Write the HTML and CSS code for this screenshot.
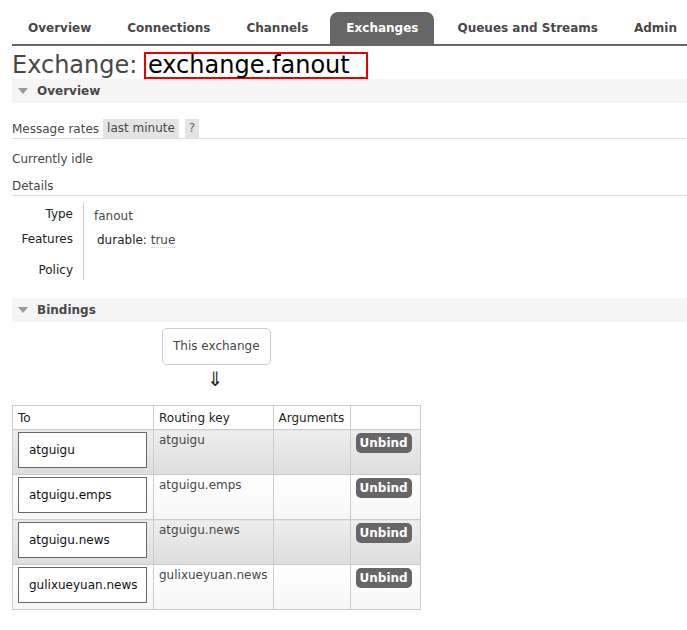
FILE: index.html
```html
<!DOCTYPE html>
<html>
<head>
<meta charset="utf-8">
<link rel="stylesheet" href="styles.css">
</head>
<body>
<div class="page">
  <nav class="tabs">
    <a class="tab">Overview</a>
    <a class="tab">Connections</a>
    <a class="tab">Channels</a>
    <a class="tab active">Exchanges</a>
    <a class="tab">Queues and Streams</a>
    <a class="tab">Admin</a>
  </nav>
  <h1 class="title">Exchange: <span class="name">exchange.fanout</span></h1>

  <div class="section-head"><span class="tri"></span>Overview</div>
  <div class="rates">
    <span>Message rates</span>
    <span class="chip">last minute</span>
    <span class="chip q">?</span>
  </div>
  <div class="idle">Currently idle</div>
  <div class="details-title">Details</div>
  <div class="facts">
    <div class="labels">
      <div class="lbl l1">Type</div>
      <div class="lbl l2">Features</div>
      <div class="lbl l3">Policy</div>
    </div>
    <div class="values">
      <div class="val v1">fanout</div>
      <div class="val v2"><span class="dk">durable:</span> <span class="tru">true</span></div>
    </div>
  </div>

  <div class="section-head bind"><span class="tri"></span>Bindings</div>
  <div class="flow">
    <div class="this-ex">This exchange</div>
    <div class="arrow">⇓</div>
  </div>
  <table class="bindings">
    <thead>
      <tr><th class="c1">To</th><th class="c2">Routing key</th><th class="c3">Arguments</th><th class="c4"></th></tr>
    </thead>
    <tbody>
      <tr class="alt1"><td><div class="qbox">atguigu</div></td><td class="rk">atguigu</td><td></td><td><span class="btn">Unbind</span></td></tr>
      <tr class="alt2"><td><div class="qbox">atguigu.emps</div></td><td class="rk">atguigu.emps</td><td></td><td><span class="btn">Unbind</span></td></tr>
      <tr class="alt1"><td><div class="qbox">atguigu.news</div></td><td class="rk">atguigu.news</td><td></td><td><span class="btn">Unbind</span></td></tr>
      <tr class="alt2"><td><div class="qbox">gulixueyuan.news</div></td><td class="rk">gulixueyuan.news</td><td></td><td><span class="btn">Unbind</span></td></tr>
    </tbody>
  </table>
</div>
</body>
</html>
```
FILE: styles.css
```css
html, body { margin: 0; padding: 0; background: #fff; }
body { font-family: "DejaVu Sans", Verdana, sans-serif; font-size: 12px; color: #484848; }
.page { padding: 12px 0 0 12px; }

.tabs { display: flex; height: 32px; border-bottom: 2px solid #666; white-space: nowrap; }
.tab { display: block; font-weight: bold; font-size: 12px; line-height: 32px; padding: 0 18px; color: #484848; }
.tab:first-child { padding-left: 16px; }
.tab.active { background: #666; color: #fff; border-radius: 8px 8px 0 0; padding: 0 16px; margin-left: 4px; margin-right: 5px; }

.title { margin: 5px 0 0 0; font-weight: normal; font-size: 24px; line-height: 28px; height: 28px; color: #484848; }
.name { display: inline-block; border: 2px solid #e00; color: #000; padding: 0 16px 0 2px; line-height: 23px; height: 23px; vertical-align: top; margin-top: 1px; margin-left: -1px; }

.section-head { background: #f5f5f5; height: 24px; line-height: 24px; font-weight: bold; font-size: 12px; display: flex; align-items: center; }
.tri { width: 0; height: 0; border-left: 5px solid transparent; border-right: 5px solid transparent; border-top: 6px solid #999; margin: 0 9px 0 6px; }

.rates { margin-top: 16px; display: flex; align-items: center; border-bottom: 1px solid #ddd; height: 19px; }
.chip { background: #e4e4e4; padding: 0 4px; margin-left: 4px; line-height: 19px; }
.chip.q { margin-left: 6px; color: #666; }
.idle { margin-top: 13px; line-height: 14px; }
.details-title { margin-top: 13px; line-height: 14px; padding-bottom: 2px; border-bottom: 1px solid #ddd; }

.facts { display: flex; margin-top: 11px; }
.labels { width: 61px; text-align: right; color: #222; }
.lbl { line-height: 14px; }
.l2 { margin-top: 11px; }
.l3 { margin-top: 17px; }
.values { margin-left: 10px; border-left: 1px solid #ccc; padding-left: 10px; height: 78px; margin-top: -5px; }
.val { line-height: 14px; }
.v1 { margin-top: 7px; }
.v2 { margin-top: 8px; padding-left: 3px; }
.dk { color: #222; }
.tru { border-bottom: 1px dotted #ccc; display: inline-block; margin-top: 2px; }

.bind { margin-top: 18px; }
.flow { display: flex; flex-direction: column; align-items: flex-start; padding-left: 150px; }
.this-ex { margin-top: 6px; border: 1px solid #ccc; border-radius: 5px; padding: 0 10px; line-height: 35px; height: 35px; }
.arrow { font-size: 20px; line-height: 20px; margin-left: 45px; margin-top: 4px; color: #222; }

.bindings { border-collapse: collapse; margin-top: 16px; border: 1px solid #ccc; }
.bindings th { font-weight: normal; text-align: left; padding: 0 5px; height: 23px; border: 1px solid #ccc; color: #222; background: #fff; }
.bindings th.c1 { width: 130px; }
.bindings th.c2 { width: 107px; }
.bindings th.c3 { width: 66px; }
.bindings th.c4 { width: 59px; }
.bindings td { border: 1px solid #ccc; vertical-align: top; padding: 2px 5px; height: 39px; }
.bindings tr.alt1 td { background: linear-gradient(#eee, #ddd); }
.bindings tr.alt2 td { background: linear-gradient(#fff, #f6f6f6); }
.qbox { border: 1px solid #666; height: 34px; line-height: 34px; padding-left: 10px; background: #fff; color: #111; width: 117px; }
.rk { padding-top: 3px !important; }
.btn { display: inline-block; background: #666; color: #fff; font-weight: bold; border-radius: 5px; padding: 0 4px; line-height: 20px; margin-top: 1px; }
```
